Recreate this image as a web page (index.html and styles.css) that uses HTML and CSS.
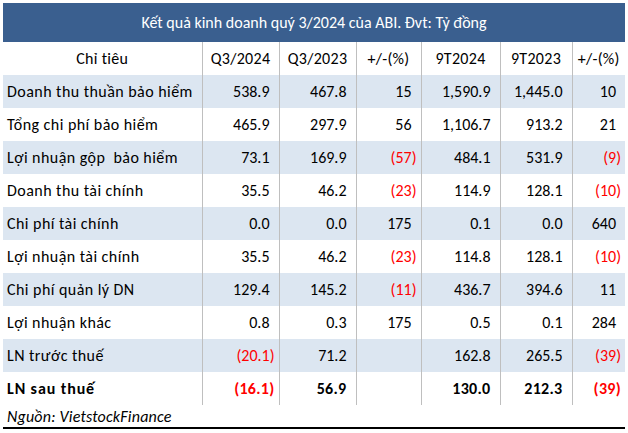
FILE: index.html
```html
<!DOCTYPE html>
<html lang="vi">
<head>
<meta charset="utf-8">
<link rel="stylesheet" href="styles.css">
</head>
<body>
<div class="wrap">
  <div class="banner">Kết quả kinh doanh quý 3/2024 của ABI. Đvt: Tỷ đồng</div>
  <table class="tbl">
    <colgroup>
      <col class="c1"><col class="c2"><col class="c3"><col class="c4"><col class="c5"><col class="c6"><col class="c7">
    </colgroup>
    <thead>
      <tr class="head">
        <th>Chỉ tiêu</th><th>Q3/2024</th><th>Q3/2023</th><th>+/-(%)</th><th>9T2024</th><th>9T2023</th><th>+/-(%)</th>
      </tr>
    </thead>
    <tbody>
      <tr class="alt"><td>Doanh thu thuần bảo hiểm</td><td>538.9</td><td>467.8</td><td>15</td><td>1,590.9</td><td>1,445.0</td><td>10</td></tr>
      <tr><td>Tổng chi phí bảo hiểm</td><td>465.9</td><td>297.9</td><td>56</td><td>1,106.7</td><td>913.2</td><td>21</td></tr>
      <tr class="alt"><td>Lợi nhuận gộp&nbsp; bảo hiểm</td><td>73.1</td><td>169.9</td><td class="neg">(57)</td><td>484.1</td><td>531.9</td><td class="neg">(9)</td></tr>
      <tr><td>Doanh thu tài chính</td><td>35.5</td><td>46.2</td><td class="neg">(23)</td><td>114.9</td><td>128.1</td><td class="neg">(10)</td></tr>
      <tr class="alt"><td>Chi phí tài chính</td><td>0.0</td><td>0.0</td><td>175</td><td>0.1</td><td>0.0</td><td>640</td></tr>
      <tr><td>Lợi nhuận tài chính</td><td>35.5</td><td>46.2</td><td class="neg">(23)</td><td>114.8</td><td>128.1</td><td class="neg">(10)</td></tr>
      <tr class="alt"><td>Chi phí quản lý DN</td><td>129.4</td><td>145.2</td><td class="neg">(11)</td><td>436.7</td><td>394.6</td><td>11</td></tr>
      <tr><td>Lợi nhuận khác</td><td>0.8</td><td>0.3</td><td>175</td><td>0.5</td><td>0.1</td><td>284</td></tr>
      <tr class="alt"><td>LN trước thuế</td><td class="neg">(20.1)</td><td>71.2</td><td></td><td>162.8</td><td>265.5</td><td class="neg">(39)</td></tr>
      <tr class="bold"><td>LN sau thuế</td><td class="neg">(16.1)</td><td>56.9</td><td></td><td>130.0</td><td>212.3</td><td class="neg">(39)</td></tr>
    </tbody>
  </table>
  <div class="source">Nguồn: VietstockFinance</div>
</div>
</body>
</html>
```

FILE: styles.css
```css
html, body {
  margin: 0;
  padding: 0;
  background: #ffffff;
}
body {
  font-family: Carlito, Calibri, Lato, "Liberation Sans", sans-serif;
  font-size: 16px;
  color: #000000;
}
.wrap {
  width: 622px;
  padding: 3px 0 0 3px;
}
.banner {
  height: 39px;
  background: #3a5f8f;
  color: #ffffff;
  font-size: 16px;
  display: flex;
  align-items: center;
  justify-content: center;
}
.tbl {
  width: 622px;
  border-collapse: collapse;
  table-layout: fixed;
}
.c1 { width: 199px; }
.c2 { width: 77px; }
.c3 { width: 77px; }
.c4 { width: 65px; }
.c5 { width: 79px; }
.c6 { width: 72px; }
.c7 { width: 53px; }
.tbl th, .tbl td {
  height: 33px;
  padding: 0 9px 0 4px;
  box-sizing: border-box;
  border-left: 1px solid #bfbfbf;
  font-weight: normal;
  white-space: nowrap;
  text-align: right;
  vertical-align: middle;
}
.tbl th:first-child, .tbl td:first-child {
  border-left: none;
}
.tbl th {
  text-align: center;
  padding: 0 2px;
  letter-spacing: 0.3px;
}
.tbl td:first-child {
  text-align: left;
  padding-left: 4px;
  letter-spacing: 0.45px;
}
.tbl tr.alt td {
  background: #dce6f1;
}
.tbl td.neg {
  color: #ff0000;
  padding-right: 4px;
}
.tbl tr.bold td {
  font-weight: bold;
  letter-spacing: 0.3px;
}
.tbl tr.bold td:first-child {
  letter-spacing: 0.9px;
}
.source {
  font-style: italic;
  padding: 2px 0 0 4px;
  height: 20px;
  line-height: 20px;
  letter-spacing: 0.2px;
  border-bottom: 2px solid #000000;
}
```
